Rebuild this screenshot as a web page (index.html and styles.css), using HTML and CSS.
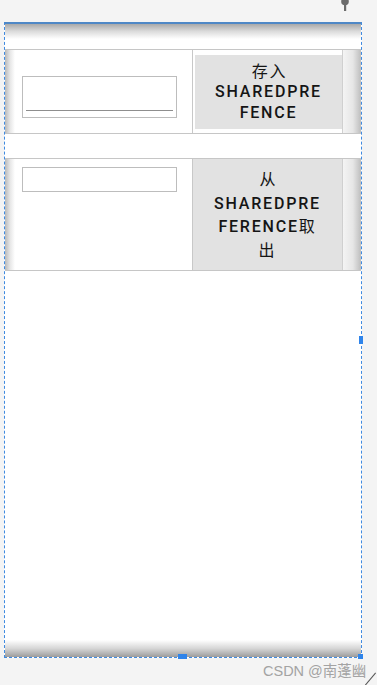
FILE: index.html
```html
<!DOCTYPE html>
<html>
<head>
<meta charset="utf-8">
<link rel="stylesheet" href="styles.css">
</head>
<body>
<div class="stage">
  <svg class="pin" width="12" height="13" viewBox="0 0 12 13"><circle cx="6" cy="3.5" r="3.8" fill="#6b6b6b"/><rect x="5" y="5" width="2.2" height="8" fill="#6b6b6b"/></svg>
  <div class="canvas">
    <div class="appbar-shadow"></div>
    <div class="row row1">
      <div class="shade-left"></div>
      <div class="cell-left">
        <div class="edit edit1"><div class="underline"></div></div>
      </div>
      <div class="btn-area">
        <div class="btn btn1"><p class="label">存入<br><span class="lat">SHAREDPRE</span><br><span class="lat">FENCE</span></p></div>
      </div>
      <div class="shade-right"></div>
    </div>
    <div class="row row2">
      <div class="shade-left"></div>
      <div class="cell-left">
        <div class="edit edit2"></div>
      </div>
      <div class="btn-area">
        <div class="btn btn2"><p class="label">从<br><span class="lat">SHAREDPRE</span><br><span class="lat">FERENCE</span>取<br>出</p></div>
      </div>
      <div class="shade-right"></div>
    </div>
    <div class="spacer"></div>
    <div class="navbar-shadow"></div>
    <div class="handle handle-bottom"></div>
    <div class="handle handle-corner"></div>
    <div class="handle handle-right"></div>
  </div>
  <div class="watermark">CSDN @南蓬幽</div>
  <div class="slash"></div>
</div>
</body>
</html>
```

FILE: styles.css
```css
html, body {
  margin: 0;
  padding: 0;
  background: #f4f4f4;
  font-family: Roboto, "Noto Sans CJK SC", sans-serif;
}
.stage {
  position: relative;
  width: 377px;
  height: 685px;
  padding: 22px 0 0 4px;
  box-sizing: border-box;
  overflow: hidden;
}
.pin {
  position: absolute;
  left: 339px;
  top: -2px;
}
.canvas {
  position: relative;
  width: 358px;
  height: 636px;
  box-sizing: border-box;
  border: 1px dashed #3f8ae0;
  border-top: 2px solid #4f88c6;
  background: #ffffff;
  display: flex;
  flex-direction: column;
}
.appbar-shadow {
  height: 15px;
  background: linear-gradient(to bottom, #a9a9a9, #dcdcdc 50%, #ffffff);
  margin-bottom: 10px;
}
.row {
  display: flex;
  border-top: 1px solid #c6c6c6;
  border-bottom: 1px solid #c6c6c6;
  background: #fff;
}
.row1 { height: 83px; }
.row2 { height: 111px; margin-top: 24px; }
.shade-left {
  width: 10px;
  background: linear-gradient(to right, #b9b9b9, #e6e6e6 50%, #ffffff);
}
.cell-left {
  width: 178px;
  padding-left: 7px;
  box-sizing: border-box;
  border-right: 1px solid #c8c8c8;
}
.edit {
  width: 155px;
  box-sizing: border-box;
  border: 1px solid #bdbdbd;
  position: relative;
}
.edit1 { height: 42px; margin-top: 26px; }
.edit2 { height: 25px; margin-top: 8px; }
.underline {
  position: absolute;
  left: 3px;
  right: 3px;
  top: 33px;
  height: 1px;
  background: #8e8e8e;
}
.btn-area {
  width: 149px;
  display: flex;
  flex-direction: column;
}
.btn {
  background: #e2e2e2;
  color: #151515;
  font-size: 16px;
  font-weight: 400;
  letter-spacing: 1.8px;
  text-align: center;
  display: flex;
  align-items: center;
  justify-content: center;
}
.label {
  margin: 0;
  text-indent: 2px;
}
.lat { font-weight: 500; }
.btn1 {
  margin: 5px 0 4px 2px;
  flex: 1;
  line-height: 20.5px;
  padding-top: 1px;
}
.btn2 {
  flex: 1;
  line-height: 23.5px;
  padding-top: 1px;
}
.shade-right {
  flex: 1;
  border-left: 1px solid #d0d0d0;
  background: linear-gradient(to right, #f4f4f4, #e6e6e6 55%, #bdbdbd);
}
.spacer { flex: 1; }
.navbar-shadow {
  height: 17px;
  background: linear-gradient(to bottom, #ffffff, #d6d6d6 50%, #9c9c9c);
}
.handle {
  position: absolute;
  background: #2f84ea;
}
.handle-bottom { left: 173px; bottom: -2px; width: 9px; height: 5px; }
.handle-corner { right: -2px; bottom: -2px; width: 5px; height: 5px; }
.handle-right { right: -2px; top: 312px; width: 4px; height: 8px; }
.watermark {
  position: absolute;
  left: 263px;
  top: 659px;
  font-size: 14.5px;
  color: #a3a3a3;
  font-family: "Liberation Sans", "Noto Sans CJK SC", sans-serif;
}
.slash {
  position: absolute;
  left: 370px;
  top: 671px;
  width: 1px;
  height: 16px;
  background: #555;
  transform: rotate(40deg);
}
```
